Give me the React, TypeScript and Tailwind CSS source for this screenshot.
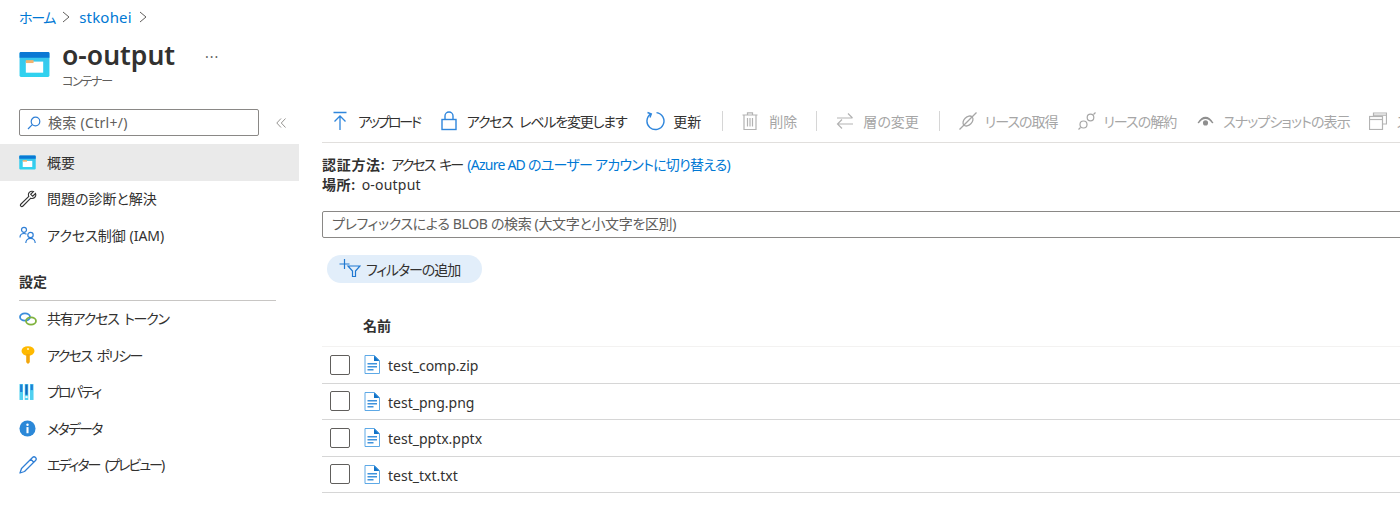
import type { ReactNode } from "react";

const ContainerIcon = ({ large }: { large?: boolean }) => (
    <svg viewBox="0 0 32 28" className={large ? "w-[31px] h-[27px]" : "w-[17px] h-[15px]"}>
        <defs>
            <linearGradient id={large ? "cg1" : "cg2"} x1="0" y1="0" x2="0" y2="1">
                <stop offset="0" stopColor="#3cc3ec" />
                <stop offset="1" stopColor="#2fd3ef" />
            </linearGradient>
        </defs>
        <rect x="0.5" y="1" width="31" height="26" rx="1.5" fill={`url(#${large ? "cg1" : "cg2"})`} />
        <path d="M0.5 7V2.5A1.5 1.5 0 0 1 2 1h28a1.5 1.5 0 0 1 1.5 1.5V7z" fill="#0a78d4" />
        <rect x="7" y="11" width="18" height="11.500" fill="#ffffff" />
        <rect x="7" y="9.500" width="8" height="3" fill="#f6b26b" />
    </svg>
);

const WrenchIcon = () => (
    <svg viewBox="0 0 18 18" className="w-[18px] h-[18px]" fill="none" stroke="#333" strokeWidth="1.100">
        <path d="M16.500 3.500 13.700 6.200 11.700 4.300 14.500 1.500C12.500.8 10.200 1.500 9.600 3.500c-.3 1-.2 2 .2 2.800L2 14c-1.500 1.500.5 3.500 2 2l7.800-7.800c2.700 1 6-1.300 4.700-4.700z" />
    </svg>
);

const PeopleIcon = () => (
    <svg viewBox="0 0 18 18" className="w-[18px] h-[18px]" fill="none" stroke="#2f7fd6" strokeWidth="1.200">
        <circle cx="5" cy="3.800" r="2.500" />
        <path d="M1 11.500c0-2.500 1.500-4 4-4 1 0 1.800.2 2.500.7" />
        <circle cx="11.500" cy="9" r="2.700" />
        <path d="M6.800 17c0-2.700 2-4.600 4.700-4.600s4.700 1.900 4.700 4.600" />
    </svg>
);

const LinkIcon = () => (
    <svg viewBox="0 0 18 14" className="w-[18px] h-[14px]" fill="none" strokeWidth="1.800">
        <ellipse cx="6" cy="5" rx="5" ry="3.700" stroke="#3a8ddb" />
        <ellipse cx="12" cy="9" rx="5" ry="3.700" stroke="#7fb23c" />
    </svg>
);

const KeyIcon = () => (
    <svg viewBox="0 0 18 18" className="w-[18px] h-[18px]">
        <ellipse cx="9" cy="5" rx="6.500" ry="4.800" fill="#ffb900" />
        <circle cx="9" cy="3" r="1.100" fill="#fff3c4" />
        <path d="M7.200 8h3.600v8.300L9 18 7.200 16.300z" fill="#f2a60c" />
    </svg>
);

const PropsIcon = () => (
    <svg viewBox="0 0 16 18" className="w-[15px] h-[18px]">
        <rect x="0.500" y="0.500" width="3.800" height="17" fill="#50d0f0" />
        <rect x="6.100" y="0.500" width="3.800" height="17" fill="#50d0f0" />
        <rect x="11.700" y="0.500" width="3.800" height="17" fill="#50d0f0" />
        <rect x="1.200" y="1" width="2.400" height="8" fill="#1f7fd6" />
        <rect x="6.800" y="1" width="2.400" height="11" fill="#1467bd" />
        <rect x="12.400" y="1" width="2.400" height="6" fill="#1f7fd6" />
        <rect x="6.800" y="13.500" width="2.400" height="1.800" fill="#fff" />
    </svg>
);

const InfoIcon = () => (
    <svg viewBox="0 0 18 18" className="w-[17px] h-[17px]">
        <circle cx="9" cy="9" r="8.500" fill="#2b88d8" />
        <circle cx="9" cy="5" r="1.300" fill="#fff" />
        <rect x="7.900" y="7.500" width="2.200" height="6.500" fill="#fff" />
    </svg>
);

const PencilIcon = () => (
    <svg viewBox="0 0 18 18" className="w-[18px] h-[18px]" fill="none" stroke="#2f7fd6" strokeWidth="1.300">
        <path d="M13.500 1.500a2 2 0 0 1 3 3L5.500 15.500 1 17l1.500-4.500zM11.800 3.200l3 3" strokeLinejoin="round" />
    </svg>
);

const SearchIcon = () => (
    <svg viewBox="0 0 14 14" className="w-[14px] h-[14px]" fill="none" stroke="#2f7fd6" strokeWidth="1.200">
        <circle cx="8.500" cy="5.500" r="4.300" />
        <path d="M5.300 8.700 1 13" />
    </svg>
);

const FileIcon = () => (
    <svg viewBox="0 0 16 19" className="w-[16px] h-[19px]">
        <path d="M1 .5h9.500L15.500 5.500V18.500H1z" fill="#fff" stroke="#5ea9e6" />
        <path d="M10 .5v5.500h5.500z" fill="#1173c9" />
        <rect x="3.500" y="8" width="9.500" height="1.500" fill="#3f92dc" />
        <rect x="3.500" y="11" width="9.500" height="1.500" fill="#3f92dc" />
        <rect x="3.500" y="14" width="6" height="1.500" fill="#3f92dc" />
    </svg>
);

const Chevron = () => (
    <svg viewBox="0 0 8 12" className="w-[8px] h-[12px] ml-[7px] mr-[9px]" fill="none" stroke="#605e5c" strokeWidth="1">
        <path d="M1 1l6 5-6 5" />
    </svg>
);

const tool = {
    upload: (
        <svg viewBox="0 0 16 20" className="w-[16px] h-[20px]" fill="none" stroke="#2f86dc" strokeWidth="1.300">
            <path d="M1.500 1.500h13M8 19V5M2.500 10.500 8 5l5.500 5.500" />
        </svg>
    ),
    lock: (
        <svg viewBox="0 0 16 20" className="w-[16px] h-[20px]" fill="none" stroke="#2f86dc" strokeWidth="1.400">
            <rect x="1" y="8.500" width="14" height="10" />
            <path d="M4 8.500V5a4 4 0 0 1 8 0v3.500" />
        </svg>
    ),
    refresh: (
        <svg viewBox="0 0 20 20" className="w-[20px] h-[20px]" fill="none" stroke="#2f86dc" strokeWidth="1.400">
            <path d="M6 2.800A8.500 8.500 0 1 0 11.500 1.600" />
            <path d="M2.500 1.500 6.300 3 5 6.500" />
        </svg>
    ),
    trash: (
        <svg viewBox="0 0 16 18" className="w-[16px] h-[18px]" fill="none" stroke="#b3b3b3" strokeWidth="1.200">
            <path d="M0.500 3h15M5.500 3V.8h5V3M2 3v14.500h12V3M5.500 6v8.500M8 6v8.500M10.500 6v8.500" />
        </svg>
    ),
    swap: (
        <svg viewBox="0 0 18 18" className="w-[18px] h-[18px]" fill="none" stroke="#b3b3b3" strokeWidth="1.200">
            <path d="M1 6h15.500M12 1.500 16.500 6M17 12H1.500M6 7.500 1.500 12 6 16.500" />
        </svg>
    ),
    plug: (
        <svg viewBox="0 0 18 18" className="w-[18px] h-[18px]" fill="none" stroke="#a6a6a6" strokeWidth="1.300">
            <path d="M.5 17.500 17.500.5" />
            <ellipse cx="9" cy="9" rx="5.800" ry="4" transform="rotate(-45 9 9)" />
        </svg>
    ),
    unplug: (
        <svg viewBox="0 0 18 18" className="w-[18px] h-[18px]" fill="none" stroke="#a6a6a6" strokeWidth="1.200">
            <path d="M.5 17.500 2.500 15.500M15.500 2.500 17.500.5" />
            <circle cx="5.500" cy="12.500" r="3.500" />
            <circle cx="12.500" cy="5.500" r="3.300" />
        </svg>
    ),
    eye: (
        <svg viewBox="0 0 18 12" className="w-[17px] h-[12px]">
            <path d="M.5 8C3 3.500 6 1.500 9 1.500s6 2 8.500 6.500L16 8.500C14 5.500 11.500 4 9 4S4 5.500 2 8.500z" fill="#8f8f8f" />
            <circle cx="9" cy="8" r="2.700" fill="#8f8f8f" />
        </svg>
    ),
    copy: (
        <svg viewBox="0 0 18 18" className="w-[18px] h-[18px]" fill="none" stroke="#b3b3b3" strokeWidth="1.200">
            <path d="M4.500 4V1h13v11H14" />
            <path d="M4.500 3.200h13" />
            <rect x="0.500" y="4.500" width="13" height="13" />
            <path d="M.5 7.500h13" />
        </svg>
    ),
};

const SideItem = ({ icon, label, active, track }: { icon: ReactNode; label: string; active?: boolean; track?: string }) => (
    <div className={`h-[36.500px] shrink-0 flex items-center pl-[19px] text-[14px] text-[#323130] ${active ? "bg-[#eaeaea]" : ""}`}>
        <span className="w-[28px] flex items-center shrink-0">{icon}</span>
        <span className={track}>{label}</span>
    </div>
);

const ToolBtn = ({ icon, label, disabled, iconW, gap, track }: { icon: ReactNode; label: string; disabled?: boolean; iconW: string; gap: string; track?: string }) => (
    <div className={`flex items-center shrink-0 whitespace-nowrap text-[14px] ${disabled ? "text-[#a6a6a6]" : "text-[#323130]"}`}>
        <span className={`flex justify-center ${iconW} ${gap}`}>{icon}</span>
        <span className={track}>{label}</span>
    </div>
);

const Sep = () => <div className="w-px h-[20px] bg-[#d6d6d6] shrink-0" />;

const files = ["test_comp.zip", "test_png.png", "test_pptx.pptx", "test_txt.txt"];

export default function App() {
    return (
        <div className="w-[1400px] h-[515px] overflow-hidden bg-white flex font-['Noto_Sans','Noto_Sans_CJK_JP',sans-serif] [font-feature-settings:'palt'] text-[#323130]">
            <aside className="w-[299px] shrink-0 flex flex-col">
                <div className="h-[34px] pl-[19px] flex items-center text-[14px] text-[#0078d4]">
                    <span className="tracking-[-1.300px]">ホーム</span>
                    <Chevron />
                    <span className="text-[15px] tracking-[0.200px]">stkohei</span>
                    <Chevron />
                </div>
                <div className="h-[66px] pl-[19px] flex items-start">
                    <div className="mt-[17px] mr-[12px]"><ContainerIcon large /></div>
                    <div className="flex flex-col">
                        <div className="flex items-center h-[40px] mt-[1px]">
                            <span className="text-[26.500px] font-semibold leading-none">o-output</span>
                            <span className="ml-[30px] mb-[6px] text-[14px] text-[#605e5c] tracking-[1px]">...</span>
                        </div>
                        <span className="text-[12px] leading-[14px] text-[#605e5c] tracking-[-1.300px]">コンテナー</span>
                    </div>
                </div>
                <div className="h-[44px] pt-[9px] pl-[19px] flex items-start">
                    <div className="w-[240px] h-[27px] border border-[#8a8886] rounded-[2px] flex items-center pl-[7px] text-[14px] text-[#605e5c]">
                        <SearchIcon />
                        <span className="ml-[7px] tracking-[0.300px]">検索 (Ctrl+/)</span>
                    </div>
                    <svg viewBox="0 0 10 10" className="w-[10px] h-[10px] ml-[17px] mt-[9px]" fill="none" stroke="#8a8886" strokeWidth="0.900">
                        <path d="M5 .5.800 5 5 9.500M9.500.5 5.300 5l4.200 4.500" />
                    </svg>
                </div>
                <SideItem active icon={<ContainerIcon />} label="概要" />
                <SideItem icon={<WrenchIcon />} label="問題の診断と解決" />
                <SideItem icon={<PeopleIcon />} label="アクセス制御 (IAM)" />
                <div className="mt-[18px] ml-[19px] mr-[23px] h-[29px] shrink-0 border-b border-[#c8c6c4] text-[14px] font-semibold leading-[20px]">設定</div>
                <SideItem icon={<LinkIcon />} label="共有アクセス トークン" track="tracking-[-1.200px] [word-spacing:3px]" />
                <SideItem icon={<KeyIcon />} label="アクセス ポリシー" track="tracking-[-1.600px] [word-spacing:3px]" />
                <SideItem icon={<PropsIcon />} label="プロパティ" track="tracking-[-1.800px]" />
                <SideItem icon={<InfoIcon />} label="メタデータ" track="tracking-[-1.800px]" />
                <SideItem icon={<PencilIcon />} label="エディター (プレビュー)" track="tracking-[-2px] [word-spacing:4px]" />
            </aside>
            <main className="flex-1 min-w-0 pl-[23px] flex flex-col">
                <div className="h-[143px] shrink-0 pt-[100px] border-b border-[#e1dfdd] -mr-[20px]">
                    <div className="h-[42px] flex items-center pl-[10px] overflow-hidden">
                        <ToolBtn icon={tool.upload} label="アップロード" iconW="w-[16px]" gap="mr-[10px]" track="tracking-[-2.300px]" />
                        <div className="w-[21px] shrink-0" />
                        <ToolBtn icon={tool.lock} label="アクセス レベルを変更します" iconW="w-[16px]" gap="mr-[10px]" track="tracking-[-1.200px] [word-spacing:4px]" />
                        <div className="w-[19px] shrink-0" />
                        <ToolBtn icon={tool.refresh} label="更新" iconW="w-[20px]" gap="mr-[8px]" />
                        <div className="w-[21px] shrink-0" />
                        <Sep />
                        <div className="w-[19px] shrink-0" />
                        <ToolBtn disabled icon={tool.trash} label="削除" iconW="w-[16px]" gap="mr-[11px]" />
                        <div className="w-[19px] shrink-0" />
                        <Sep />
                        <div className="w-[19px] shrink-0" />
                        <ToolBtn disabled icon={tool.swap} label="層の変更" iconW="w-[18px]" gap="mr-[9px]" />
                        <div className="w-[20px] shrink-0" />
                        <Sep />
                        <div className="w-[19px] shrink-0" />
                        <ToolBtn disabled icon={tool.plug} label="リースの取得" iconW="w-[18px]" gap="mr-[8px]" track="tracking-[-1px]" />
                        <div className="w-[20px] shrink-0" />
                        <ToolBtn disabled icon={tool.unplug} label="リースの解約" iconW="w-[18px]" gap="mr-[8px]" track="tracking-[-1px]" />
                        <div className="w-[21px] shrink-0" />
                        <ToolBtn disabled icon={tool.eye} label="スナップショットの表示" iconW="w-[17px]" gap="mr-[9px]" track="tracking-[-0.900px]" />
                        <div className="w-[19px] shrink-0" />
                        <ToolBtn disabled icon={tool.copy} label="スナップショットの作成" iconW="w-[18px]" gap="mr-[10px]" track="tracking-[-0.900px]" />
                    </div>
                </div>
                <div className="mt-[12px] text-[14px] leading-[20px] whitespace-nowrap">
                    <div className="flex">
                        <span className="font-semibold tracking-[0.700px] mr-[6px]">認証方法:</span>
                        <span className="tracking-[-2px] [word-spacing:3.500px] mr-[5px]">アクセス キー</span>
                        <span className="text-[#0078d4] tracking-[-0.750px]">(Azure AD のユーザー アカウントに切り替える)</span>
                    </div>
                    <div className="flex">
                        <span className="font-semibold tracking-[0.600px] mr-[6px]">場所:</span>
                        <span className="tracking-[0.200px]">o-output</span>
                    </div>
                </div>
                <div className="mt-[16px] h-[27px] -mr-[20px] border border-[#8a8886] rounded-[2px] flex items-center pl-[9px] pb-[2px] text-[14px] text-[#605e5c] tracking-[-0.350px]">
                    プレフィックスによる BLOB の検索 (大文字と小文字を区別)
                </div>
                <div className="mt-[17px] ml-[5px] w-[155px] h-[28px] rounded-full bg-[#e2eefa] flex items-center pl-[12px] text-[14px]">
                    <svg viewBox="0 0 22 20" className="w-[22px] h-[20px] -mt-[2px] shrink-0" fill="none" stroke="#1f78d1" strokeWidth="1.200">
                        <path d="M5.500 1v10M.5 6h10" />
                        <path d="M9 8h12l-4.500 5v5.500h-3V13z" />
                    </svg>
                    <span className="ml-[5px] tracking-[-1.100px]">フィルターの追加</span>
                </div>
                <div className="mt-[21px] h-[43px] pl-[41px] flex items-center text-[14px] font-semibold border-b border-[#f3f2f1]">
                    名前
                </div>
                {files.map((name) => (
                    <div key={name} className="h-[36.500px] shrink-0 flex items-center border-b border-[#d6d6d6] pl-[8px] text-[14px]">
                        <span className="w-[20px] h-[20px] border border-[#605e5c] rounded-[2px] shrink-0" />
                        <span className="ml-[14px] mr-[8px] flex"><FileIcon /></span>
                        <span className="pt-[2px]">{name}</span>
                    </div>
                ))}
            </main>
        </div>
    );
}
